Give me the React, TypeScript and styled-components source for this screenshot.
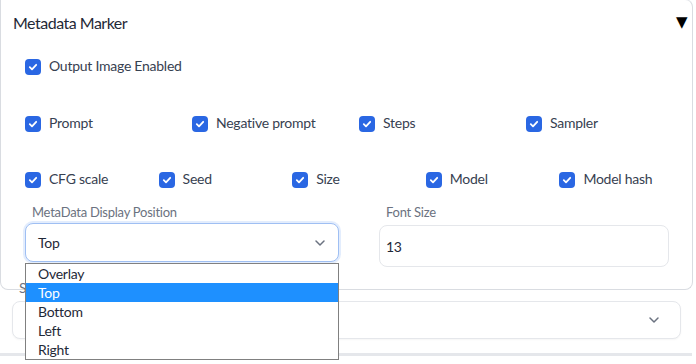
import React from "react";
import styled, { createGlobalStyle } from "styled-components";

const Global = createGlobalStyle`
  html, body { margin: 0; padding: 0; background: #ffffff; }
  body { font-family: "Lato", "Noto Sans", sans-serif; color: #374151; letter-spacing: -0.25px; }
  * { box-sizing: border-box; }
`;

const Page = styled.div`
  width: 696px;
  height: 364px;
  position: relative;
  overflow: hidden;
`;

const Panel = styled.section`
  width: 693px;
  border: 1px solid #d9dce1;
  border-top-color: #e5e7eb;
  border-radius: 0 8px 8px 8px;
  margin-top: -1px;
  padding: 0 23px 0 24px;
  height: 291px;
  display: flex;
  flex-direction: column;
`;

const Header = styled.div`
  height: 44px;
  margin: 0 -19px 0 -12px;
  display: flex;
  align-items: center;
  justify-content: space-between;
  font-size: 16px;
  letter-spacing: -0.5px;
  color: #1f2937;
`;

const Triangle = styled.span`
  font-family: "DejaVu Sans", sans-serif;
  font-size: 15px;
  color: #000;
  line-height: 1;
  margin-right: 1px;
`;

const Row = styled.div<{ $cols: number; $top: number }>`
  display: grid;
  grid-template-columns: repeat(${(p) => p.$cols}, 1fr);
  column-gap: 24px;
  margin-top: ${(p) => p.$top}px;
  height: 16px;
`;

const CheckLabel = styled.label`
  display: flex;
  align-items: center;
  gap: 8px;
  font-size: 14px;
  line-height: 16px;
  color: #374151;
  white-space: nowrap;
  height: 16px;
`;

const Box = styled.span`
  width: 16px;
  height: 16px;
  border-radius: 4px;
  background: #2a67e3;
  display: inline-flex;
  align-items: center;
  justify-content: center;
  flex: none;
  margin-top: 1px;
`;

const Fields = styled.div`
  display: grid;
  grid-template-columns: 314px 1fr;
  column-gap: 40px;
  margin-top: 15px;
  position: relative;
`;

const Field = styled.div`
  display: flex;
  flex-direction: column;
  position: relative;
`;

const FieldLabel = styled.div`
  font-size: 13px;
  color: #6b7280;
  padding-left: 7px;
  height: 20px;
  line-height: 20px;
`;

const SelectBox = styled.div<{ $focus?: boolean }>`
  margin-top: 1px;
  height: 39px;
  border: 1px solid ${(p) => (p.$focus ? "#9fbff3" : "#e5e7eb")};
  box-shadow: ${(p) => (p.$focus ? "0 0 0 2px #e3edfd" : "0 1px 2px rgba(0,0,0,0.04)")};
  border-radius: 8px;
  display: flex;
  align-items: center;
  justify-content: space-between;
  padding: 0 12px 0 12px;
  font-size: 14px;
  color: #1f2937;
  background: #fff;
`;

const InputBox = styled.div`
  margin-top: 3px;
  height: 42px;
  border: 1px solid #e5e7eb;
  border-radius: 8px;
  display: flex;
  align-items: center;
  padding: 0 6px;
  font-size: 14px;
  color: #1f2937;
`;

const Below = styled.div`
  position: relative;
  padding: 0 15px 0 12px;
`;

const HiddenLabel = styled.div`
  font-size: 14px;
  color: #6b7280;
  margin: -9px 0 0 7px;
  height: 12px;
  line-height: 14px;
  position: relative;
`;

const WideSelect = styled(SelectBox)`
  margin-top: 8px;
  height: 38px;
  padding-right: 20px;
`;

const Rule = styled.div`
  margin-top: 14px;
  width: 692px;
  height: 3px;
  background: #e5e7eb;
`;

const List = styled.ul`
  position: absolute;
  top: 263px;
  left: 25px;
  width: 314px;
  margin: 0;
  padding: 0;
  list-style: none;
  border: 1px solid #808080;
  background: #fff;
  z-index: 5;
`;

const Option = styled.li<{ $active?: boolean }>`
  height: 19px;
  line-height: 19px;
  padding-left: 12px;
  font-size: 14px;
  color: ${(p) => (p.$active ? "#fff" : "#1f2937")};
  background: ${(p) => (p.$active ? "#1e90ff" : "transparent")};
`;

const Check = () => (
  <Box>
    <svg width="10" height="10" viewBox="0 0 10 10">
      <path d="M1.8 5.2 L4 7.3 L8.2 2.8" fill="none" stroke="#fff" strokeWidth="1.8" strokeLinecap="round" strokeLinejoin="round" />
    </svg>
  </Box>
);

const Chevron = () => (
  <svg width="12" height="12" viewBox="0 0 12 12">
    <path d="M2 4 L6 8 L10 4" fill="none" stroke="#6b7280" strokeWidth="1.5" strokeLinecap="round" strokeLinejoin="round" />
  </svg>
);

const CB = ({ text }: { text: string }) => (
  <CheckLabel>
    <Check />
    {text}
  </CheckLabel>
);

export default function App() {
  return (
    <Page>
      <Global />
      <Panel>
        <Header>
          <span>Metadata Marker</span>
          <Triangle>▼</Triangle>
        </Header>
        <Row $cols={1} $top={14}>
          <CB text="Output Image Enabled" />
        </Row>
        <Row $cols={4} $top={41}>
          <CB text="Prompt" />
          <CB text="Negative prompt" />
          <CB text="Steps" />
          <CB text="Sampler" />
        </Row>
        <Row $cols={5} $top={40}>
          <CB text="CFG scale" />
          <CB text="Seed" />
          <CB text="Size" />
          <CB text="Model" />
          <CB text="Model hash" />
        </Row>
        <Fields>
          <Field>
            <FieldLabel>MetaData Display Position</FieldLabel>
            <SelectBox $focus>
              <span>Top</span>
              <Chevron />
            </SelectBox>
          </Field>
          <Field>
            <FieldLabel>Font Size</FieldLabel>
            <InputBox>13</InputBox>
          </Field>
        </Fields>
      </Panel>
      <Below>
        <HiddenLabel>S</HiddenLabel>
        <WideSelect>
          <span></span>
          <Chevron />
        </WideSelect>
      </Below>
      <Rule />
      <List>
        <Option>Overlay</Option>
        <Option $active>Top</Option>
        <Option>Bottom</Option>
        <Option>Left</Option>
        <Option>Right</Option>
      </List>
    </Page>
  );
}
